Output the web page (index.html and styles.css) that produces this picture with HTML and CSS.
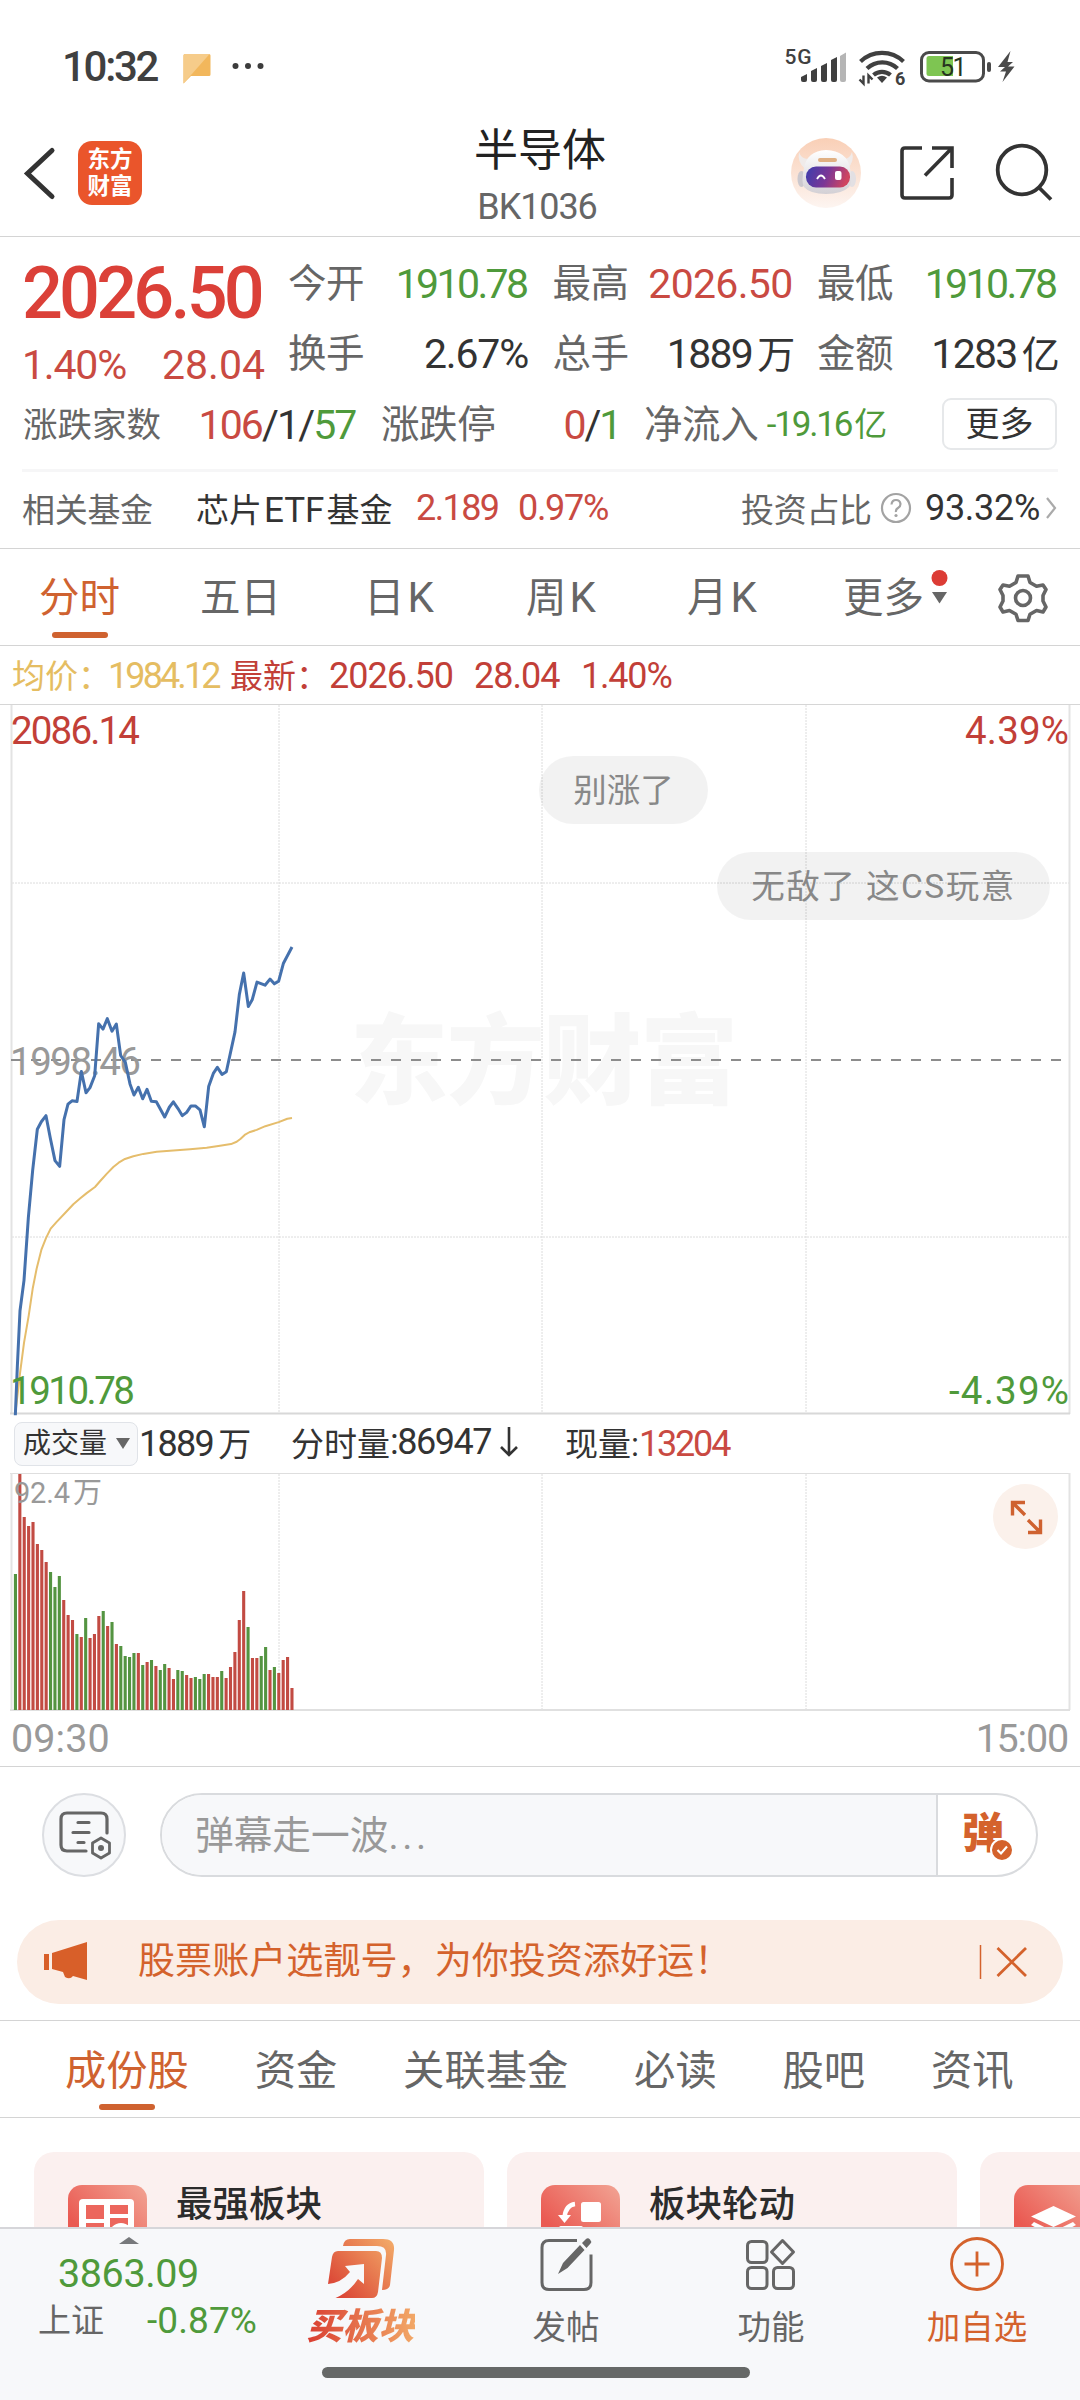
FILE: index.html
```html
<!DOCTYPE html>
<html lang="zh-CN">
<head>
<meta charset="utf-8">
<title>半导体 BK1036</title>
<link rel="stylesheet" href="styles.css">
</head>
<body>
<div class="screen">
  <div class="statusbar">
    <span class="clock">10:32</span>
    <svg class="sb-msg" viewBox="184 52 28 31"><path d="M184.500 54.500q0-1.500 1.500-1.500h24q1.500 0 1.500 1.500v19q0 1.500-1.500 1.500h-18l-7.500 7.500z" fill="#f2b75c"/><path d="M184.500 54.500q0-1.500 1.500-1.500h24.600l-26.100 29.500z" fill="#f6cc8a"/></svg>
    <svg class="sb-dots" viewBox="0 0 32 8"><g fill="#3c3c3c"><circle cx="3.500" cy="4" r="3"/><circle cx="16" cy="4" r="3"/><circle cx="28.500" cy="4" r="3"/></g></svg>
    <svg class="sb-right" viewBox="780 44 240 42">
      <text x="784.500" y="63" class="svg-5g" textLength="27">5G</text>
      <g fill="#404040"><path d="M801 76l6-3v6q0 2-2 2h-2q-2 0-2-2z"/><path d="M811 70l6-3v12q0 2-2 2h-2q-2 0-2-2z"/><path d="M821 65l6-3v17q0 2-2 2h-2q-2 0-2-2z"/><path d="M831 59l6-3v23q0 2-2 2h-2q-2 0-2-2z"/></g>
      <path d="M840 55l6-3.500v27.500q0 2-2 2h-2q-2 0-2-2z" fill="#b5b5b5"/>
      <g fill="none" stroke="#404040" stroke-width="4.200"><path d="M860.500 60.500a31 31 0 0 1 43 0"/><path d="M867 67.500a22 22 0 0 1 30.500 0"/><path d="M873.500 74a13 13 0 0 1 17 0"/></g>
      <path d="M882 82l-5-5.500q5-3.500 10 0z" fill="#404040"/>
      <path d="M863.500 74.500v8l-4-4M868.500 82.500v-8l4 4" fill="none" stroke="#404040" stroke-width="2.400"/>
      <text x="895" y="83.500" class="svg-six">6</text>
      <rect x="921.500" y="51.500" width="62" height="28.500" rx="7.500" fill="#fff" stroke="#4a4a4a" stroke-width="3"/>
      <path d="M929 55h24v20h-24q-2.500 0-2.500-2.500v-15q0-2.500 2.500-2.500z" fill="#7ec552"/>
      <rect x="987" y="61" width="4" height="10" rx="2" fill="#4a4a4a"/>
      <text x="940" y="74.500" class="svg-batt">51</text>
      <path d="M1010.500 50l-12.500 16h7l-5 4.500h6l-3.500 10.500 12-15.500h-6.500l5-4.500h-5.500z" fill="#4a4a4a"/>
    </svg>
  </div>

  <header class="header">
    <svg class="back" viewBox="22 144 36 58"><path d="M52 150.500L27.500 173.500L52 196.500" fill="none" stroke="#333" stroke-width="5" stroke-linecap="round"/></svg>
    <div class="logo"><span>东方</span><span>财富</span></div>
    <div class="title"><div class="name">半导体</div><div class="code">BK1036</div></div>
    <svg class="robot" viewBox="791 138 70 70">
      <defs><linearGradient id="rb" x1="0" y1="0" x2="0" y2="1"><stop offset="0" stop-color="#f9cfb6"/><stop offset="1" stop-color="#fdf5f1"/></linearGradient>
      <linearGradient id="rf" x1="0" y1="0" x2="1" y2=".2"><stop offset="0" stop-color="#3b3dae"/><stop offset=".55" stop-color="#7b3796"/><stop offset="1" stop-color="#cf4560"/></linearGradient>
      <linearGradient id="rh" x1="0" y1="0" x2="0" y2="1"><stop offset="0" stop-color="#fff"/><stop offset="1" stop-color="#d3d0d5"/></linearGradient></defs>
      <circle cx="826" cy="173" r="35" fill="url(#rb)"/>
      <path d="M799 152q2 7 9 7l-3 10q-8-7-6-17zM852 152q-2 7-8 7l3 10q8-7 5-17z" fill="#f0ebea"/>
      <ellipse cx="801.500" cy="179" rx="4" ry="8" fill="#cbc8ce"/><ellipse cx="852" cy="179" rx="4" ry="8" fill="#e3e0e3"/>
      <path d="M804 168q3-17 22-18q21 1 24 18q3 14-1 19q-7 7-23 7t-22-7q-3-5 0-19z" fill="url(#rh)"/>
      <rect x="818" y="158" width="19" height="4" rx="2" fill="#e0b083"/>
      <rect x="806" y="166.500" width="44" height="21" rx="10" fill="url(#rf)"/>
      <path d="M817 179q4-7 8 0" fill="none" stroke="#fff" stroke-width="1.800"/>
      <rect x="835" y="171" width="6.500" height="9" rx="2" fill="#fff"/>
    </svg>
    <svg class="share" viewBox="898 144 58 58"><g fill="none" stroke="#333" stroke-width="3.600"><path d="M922 148h-17q-3 0-3 3v44q0 3 3 3h44q3 0 3-3v-17"/><path d="M932 148h20v20M951 149l-26 26.500" /></g></svg>
    <svg class="search" viewBox="994 142 60 60"><g fill="none" stroke="#333" stroke-width="3.800"><circle cx="1022" cy="170" r="24.300"/><path d="M1039.500 188l11.500 11.500"/></g></svg>
  </header>

  <section class="quote">
    <div class="quote-top">
      <div class="price-block">
        <div class="price">2026.50</div>
        <div class="chg"><span>1.40%</span><span class="chg-abs">28.04</span></div>
      </div>
      <div class="stats">
        <div class="pair"><label>今开</label><b class="dn">1910.78</b></div>
        <div class="pair"><label>最高</label><b class="up high">2026.50</b></div>
        <div class="pair"><label>最低</label><b class="dn">1910.78</b></div>
        <div class="pair"><label>换手</label><b class="pct">2.67%</b></div>
        <div class="pair"><label>总手</label><b class="wide">1889<i>万</i></b></div>
        <div class="pair"><label>金额</label><b class="wide">1283<i>亿</i></b></div>
      </div>
    </div>
    <div class="quote-mid">
      <div class="pair p1"><label class="sm">涨跌家数</label><b><span class="up">106</span>/1/<span class="dn">57</span></b></div>
      <div class="pair p2"><label>涨跌停</label><b><span class="up">0</span>/<span class="dn">1</span></b></div>
      <div class="pair p3"><label>净流入</label><b class="dn small">-19.16<i>亿</i></b></div>
      <button class="more">更多</button>
    </div>
    <div class="fund">
      <span class="lbl">相关基金</span><span class="fname">芯片<i>ETF</i>基金</span><span class="up f1">2.189</span><span class="up f2">0.97%</span>
      <span class="lbl right">投资占比</span>
      <svg class="help" viewBox="0 0 32 32"><circle cx="16" cy="16" r="14" fill="none" stroke="#a3a3a3" stroke-width="2.200"/><path d="M11.500 12.500q.5-4.500 4.500-4.500t4.500 4q0 2.500-2.500 4t-2 4" fill="none" stroke="#a3a3a3" stroke-width="2.200"/><circle cx="16" cy="23.500" r="1.600" fill="#a3a3a3"/></svg>
      <span class="ratio">93.32%</span>
      <svg class="chev" viewBox="0 0 12 24"><path d="M2 2l8 10-8 10" fill="none" stroke="#aaa" stroke-width="2.200"/></svg>
    </div>
  </section>

  <nav class="ktabs">
    <span class="on">分时</span><span>五日</span><span>日<i>K</i></span><span>周<i>K</i></span><span>月<i>K</i></span><span class="ktmore">更多</span>
    <svg class="tri" viewBox="930 566 18 40"><circle cx="939.500" cy="577" r="8" fill="#dc3c35"/><path d="M932 591h15l-7.500 11.500z" fill="#666"/></svg>
    <svg class="gear" viewBox="998 570 50 52"><g fill="none" stroke="#666" stroke-width="3.600" stroke-linejoin="round"><path d="M1018 575h10l2 6.500 6.500 3.800 6.500-1.300 3 4.500-3 6 0 5.500 3 6-3 5-6.500-1.500-6.500 3.800-2 6.200h-10l-2-6.200-6.500-3.800-6.500 1.500-3-5 3-6v-5.500l-3-6 3-4.500 6.500 1.300 6.500-3.800z"/><circle cx="1023" cy="597" r="7.500"/></g></svg>
  </nav>

  <div class="legend"><span class="avg">均价：<em class="l1">1984.12</em></span><span class="now">最新：<em class="l2">2026.50</em><em class="l3">28.04</em><em class="l4">1.40%</em></span></div>

  <div class="chart">
    <svg class="plot" viewBox="0 704 1080 711">
      <text x="350" y="1096" class="wm" textLength="388">东方财富</text>
      <g class="grid"><path d="M279 705v709M542 705v709M806 705v709"/><path d="M12 883h1057M12 1237h1057"/></g>
      <path d="M0 704.500h1080" stroke="#d6d6d6"/>
      <path d="M11.500 705v709M1069.500 705v709" stroke="#e3e3e3" stroke-width="2"/>
      <path d="M10 1413.500h1060" stroke="#d8d8d8" stroke-width="2"/>
      <path d="M11 1060h1052" stroke="#8c8c8c" stroke-width="2" stroke-dasharray="10 10"/>
      <g class="axis"><text x="11" y="744" textLength="129" class="t-up">2086.14</text><text x="965" y="744" textLength="104" class="t-up">4.39%</text>
      <text x="10" y="1074.500" textLength="131" class="t-gray">1998.46</text></g>
      <g transform="translate(0 900) scale(.33333 .33807)" fill="none" stroke-linejoin="round">
        <path vector-effect="non-scaling-stroke" stroke="#e5bd6c" stroke-width="2" d="M46 1520L60 1400L72 1310L86 1230L98 1150L110 1090L124 1035L138 1000L152 972L170 952L196 925L220 900L240 883L260 867L285 849L300 832L320 810L340 790L356 777L375 766L400 758L430 751L470 745L520 741L570 737L620 733L660 727L693 722L710 715L722 706L734 695L748 687L770 680L796 669L836 657L862 647L876 645"/>
        <path vector-effect="non-scaling-stroke" stroke="#4571ad" stroke-width="3" d="M46 1524L52 1380L60 1215L72 1125L85 940L98 800L112 678L124 656L138 638L151 705L165 771L179 788L192 650L204 604L216 594L231 596L244 507L258 570L270 555L284 520L296 366L309 382L322 351L336 388L349 367L362 460L376 480L390 544L402 577L415 554L428 588L441 560L454 595L469 597L494 642L508 613L520 597L534 617L547 638L560 628L573 609L586 609L600 621L613 671L626 552L640 513L652 495L666 516L679 508L705 390L718 280L731 216L745 315L757 294L771 243L795 252L810 234L823 248L836 240L850 188L876 139"/>
      </g>
      <g class="axis"><text x="10" y="1404" textLength="125" class="t-dn">1910.78</text><text x="949" y="1404" textLength="120" class="t-dn">-4.39%</text></g>
    </svg>
    <div class="danmu d1">别涨了</div>
    <div class="danmu d2">无敌了 这CS玩意</div>
  </div>

  <div class="volhead">
    <span class="select">成交量<svg viewBox="0 0 14 11"><path d="M0 0h14l-7 11z" fill="#666"/></svg></span>
    <span class="v1">1889<i>万</i></span><span class="v2">分时量<em>:86947</em><svg viewBox="0 0 18 30"><path d="M9 0v28M1 20l8 8 8-8" fill="none" stroke="#333" stroke-width="2.600"/></svg></span><span class="v3">现量:<em>13204</em></span>
  </div>

  <div class="volume">
    <svg class="volplot" viewBox="0 1472 1080 240">
      <g class="grid"><path d="M279 1474v236M542 1474v236M806 1474v236"/></g>
      <path d="M10 1473.500h1060" stroke="#dedede"/><path d="M11.500 1473v237M1069.500 1473v237" stroke="#e3e3e3" stroke-width="2"/><path d="M10 1710h1060" stroke="#e0e0e0" stroke-width="2"/>
      <g id="bars"></g>
      <text x="14" y="1503" class="volmax" textLength="56">92.4</text><text x="73" y="1503" class="volmax" textLength="27">万</text>
    </svg>
    <div class="expand"><svg viewBox="1008 1500 34 34"><g fill="none" stroke="#cf6230" stroke-width="3.400"><path d="M1024 1502.500h-12.500v13M1012 1503l12 12M1027 1532.500h12.500v-13M1039 1532l-12-12"/></g></svg></div>
  </div>
  <div class="times"><span class="ta">09:30</span><span class="tb">15:00</span></div>

  <div class="inputrow">
    <div class="round"><svg viewBox="58 1811 54 50"><g fill="none" stroke="#666" stroke-width="3.200" stroke-linecap="round"><path d="M86 1852H67q-6 0-6-6v-26q0-6 6-6h34q6 0 6 6v14"/><path d="M78 1823.500h11M73 1833.500h16M78 1843.500h6"/></g><path d="M101 1839l8.500 5v10l-8.500 5-8.500-5v-10z" fill="none" stroke="#666" stroke-width="2.800" stroke-linejoin="round"/><circle cx="101" cy="1849" r="3" fill="#666"/></svg></div>
    <div class="field"><div class="ph">弹幕走一波<i>...</i></div><div class="dan"><span>弹</span><svg viewBox="0 0 24 24"><circle cx="12" cy="12" r="11" fill="#d4622c" stroke="#fff" stroke-width="2"/><path d="M7.500 12l3.500 3.500 6-7" fill="none" stroke="#fff" stroke-width="2.200"/></svg></div></div>
  </div>

  <div class="notice">
    <svg class="horn" viewBox="44 1942 44 40"><path d="M44 1954h5v16h-5zM52 1953l35-11v38l-14-4q-3 4-8 1l-2-5-11-3z" fill="#d85f29"/></svg>
    <span>股票账户选靓号，为你投资添好运！</span>
    <svg class="close" viewBox="978 1944 50 36"><path d="M980.500 1945v34" stroke="#d4622c" stroke-width="1.500"/><path d="M997.500 1948l28.500 28M1026 1948l-28.500 28" stroke="#d4622c" stroke-width="2.800"/></svg>
  </div>

  <nav class="tabs"><span class="on">成份股</span><span>资金</span><span>关联基金</span><span>必读</span><span>股吧</span><span>资讯</span></nav>

  <div class="cards">
    <div class="card"><svg class="cicon" viewBox="0 0 79 79"><defs><linearGradient id="cg" x1="0" y1="1" x2="1" y2="0"><stop offset="0.300" stop-color="#ea5a52"/><stop offset="1" stop-color="#f2a494"/></linearGradient></defs><rect width="79" height="79" rx="14" fill="url(#cg)"/><path d="M15 14h47q4 0 4 4v40H11V18q0-4 4-4z" fill="#fff"/><path d="M18 20h18v14H18zM42 20h18v9H42zM18 38h18v16H18zM42 33h18v16H42z" fill="#ec665d"/><circle cx="53" cy="50" r="12" fill="#fff"/></svg><span>最强板块</span></div>
    <div class="card"><svg class="cicon" viewBox="0 0 79 79"><rect width="79" height="79" rx="14" fill="url(#cg)"/><rect x="40" y="17" width="20" height="20" rx="2.500" fill="#fff"/><path d="M34 19q-9 1-10.500 13" fill="none" stroke="#fff" stroke-width="4.500"/><path d="M17 30h13l-6.500 8z" fill="#fff"/><rect x="18" y="41" width="24" height="22" rx="2" fill="#fff"/></svg><span>板块轮动</span></div>
    <div class="card"><svg class="cicon" viewBox="0 0 79 79"><rect width="79" height="79" rx="14" fill="url(#cg)"/><path d="M39.500 21L62 31.500 39.500 42 17 31.500z" fill="#fff"/><path d="M20 37l19.500 9.500L59 37l3 3-22.500 12L17 40z" fill="#fff"/></svg></div>
  </div>

  <footer class="bottom">
    <div class="index"><svg viewBox="0 0 20 7"><path d="M0 7L10 0l10 7z" fill="#77797c"/></svg><div class="iv">3863.09</div><div class="ic"><span>上证</span><b>-0.87%</b></div></div>
    <div class="item buy"><svg viewBox="327 2238 68 62"><defs><linearGradient id="bg" gradientUnits="userSpaceOnUse" x1="332" y1="2298" x2="392" y2="2242"><stop offset="0" stop-color="#d93d31"/><stop offset="1" stop-color="#f2a867"/></linearGradient></defs><g fill="url(#bg)"><path d="M343 2246q1-7 7-7h33q12 0 11 11l-4 35q-1 5-8 5l4-35q1-9-9-9z"/><path d="M338 2251h38q6 0 6 7l-4 34q-1 6-6 6h-36.500q14-6 22.500-19l6 5v-20l-19 2 5 6q-9 11-22 12l4-27q1-6 6-6z"/></g></svg><span>买板块</span></div>
    <div class="item post"><svg viewBox="538 2236 56 56"><g fill="none" stroke="#666" stroke-width="3"><path d="M577 2240.500h-28q-7 0-7 7v35q0 7 7 7h35q7 0 7-7v-28"/></g><path d="M558 2274l5-11 17-18 4.500 5-17 18zM582 2243l4-4q2-1.500 4 .5t.5 4l-4 4.500z" fill="#666"/></svg><span>发帖</span></div>
    <div class="item func"><svg viewBox="745 2236 54 56"><g fill="none" stroke="#666" stroke-width="3"><rect x="748.500" y="2241.500" width="19.500" height="21" rx="4"/><rect x="748.500" y="2267.500" width="19.500" height="21" rx="4"/><rect x="774.500" y="2267.500" width="20" height="21" rx="4"/><path d="M783.500 2240.500l11 11.500-11 11.500-11-11.500z" stroke-linejoin="round"/></g></svg><span>功能</span></div>
    <div class="item add"><svg viewBox="949 2237 56 56"><g fill="none" stroke="#d4622c" stroke-width="2.800"><circle cx="977" cy="2265" r="25.500"/><path d="M977 2252.500v25M964.500 2265h25"/></g></svg><span>加自选</span></div>
    <div class="home"></div>
  </footer>
</div>
<script src="script.js"></script>
</body>
</html>
```
FILE: styles.css
```css
* { box-sizing: border-box; margin: 0; padding: 0; }
body { width: 1080px; background: #fff; font-family: Roboto, "Noto Sans CJK SC", sans-serif; color: #333; }
i, em { font-style: normal; }
b { font-weight: 400; }
svg { display: block; flex: none; overflow: visible; }
span, label, b { white-space: nowrap; }
.screen { width: 1080px; height: 2400px; overflow: hidden; display: flex; flex-direction: column; }
.up { color: #c94a42; }
.dn { color: #4f9a3b; }

.statusbar { height: 130px; display: flex; align-items: center; padding: 2px 60px 0 62px; }
.clock { font-size: 42px; font-weight: 500; width: 121px; color: #404040; letter-spacing: -2.300px; }
.sb-msg { width: 28px; height: 31px; margin-top: 4px; }
.sb-dots { width: 32px; height: 8px; margin-left: 21px; }
.sb-right { width: 240px; height: 42px; margin-left: auto; }
.svg-5g { font: 500 21px Roboto; fill: #404040; }
.svg-six { font: 700 18px Roboto; fill: #404040; }
.svg-batt { font: 400 25px Roboto; fill: #26351f; letter-spacing: -1.500px; }

.header { height: 107px; border-bottom: 1px solid #d4d4d4; display: flex; align-items: flex-start; padding-left: 22px; }
.back { width: 36px; height: 58px; margin-top: 14px; }
.logo { width: 64px; height: 64px; margin: 11px 0 0 20px; background: #ea552b; border-radius: 14px; display: flex; flex-direction: column; align-items: center; padding-top: 5px; }
.logo span { font-size: 22.500px; line-height: 27px; font-weight: 700; color: #fff; }
.title { width: 300px; margin-left: 246px; text-align: center; }
.name { font-size: 44px; line-height: 50px; margin-top: -4px; color: #222; padding-left: 4px; }
.code { font-size: 36px; line-height: 40px; color: #666; margin-top: 11px; letter-spacing: -1.100px; margin-left: -2px; }
.robot { width: 70px; height: 70px; margin: 8px 0 0 103px; }
.share { width: 58px; height: 58px; margin: 14px 0 0 37px; }
.search { width: 60px; height: 60px; margin: 12px 0 0 38px; }

.quote { height: 312px; border-bottom: 1px solid #d4d4d4; }
.quote-top { display: flex; height: 151px; }
.price-block { width: 288px; padding: 19px 0 0 22px; }
.price { font-size: 72px; font-weight: 500; line-height: 76px; color: #db4038; letter-spacing: -3.800px; }
.chg { display: flex; justify-content: space-between; width: 243px; color: #c94a42; font-size: 41px; line-height: 50px; margin-top: 8px; letter-spacing: -1.200px; }
.chg-abs { letter-spacing: 0; }
.stats { display: grid; grid-template-columns: 240px 240px 240px; grid-template-rows: 50px 50px; row-gap: 20px; column-gap: 24.500px; padding-top: 22px; }
.pair { display: flex; justify-content: space-between; line-height: 50px; }
.pair label { font-size: 38.500px; color: #666; letter-spacing: -.4px; }
.pair b { font-size: 41px; letter-spacing: -2.600px; margin-right: 1.500px; }
.pair b.high { letter-spacing: -.7px; margin-right: 0; }
.pair b.wide { letter-spacing: -1.700px; margin-right: -1px; }
.pair b.pct { letter-spacing: -1.200px; margin-right: 0; }
.pair i { font-size: 38px; margin-left: 5px; }
.quote-mid { display: flex; height: 82px; padding: 12px 0 0 23px; }
.pair .sm { font-size: 34.500px; letter-spacing: 0; }
.p1 { width: 334px; } .p1 b { letter-spacing: -1.900px; }
.p2 { width: 238px; margin-left: 24px; } .p2 b { letter-spacing: -2.200px; margin-right: -1px; }
.p3 { width: 241px; margin-left: 25px; }
.pair b.small { font-size: 35px; letter-spacing: -2.200px; margin-right: 0; }
.pair b.small i { font-size: 33px; margin-left: 3px; }
.more { width: 115px; height: 52px; margin-left: 57px; border: 2px solid #e6e8ea; border-radius: 9px; background: #fff; font: 34px/42px Roboto, "Noto Sans CJK SC", sans-serif; color: #333; margin-top: -2px; }
.fund { display: flex; align-items: center; height: 78px; margin: 0 22px; border-top: 3px solid #f6f6f7; font-size: 33px; padding-bottom: 3px; margin-top: -1px; }
.fund .lbl { color: #666; font-size: 33px; letter-spacing: -.3px; width: 174px; }
.fname { width: 220px; color: #333; }
.fname i { font-size: 35px; margin: 0 2px; }
.f1, .f2, .ratio { font-size: 36px; letter-spacing: -1.600px; }
.f1 { width: 102px; } .f2 { width: 223px; letter-spacing: -1.300px; }
.fund .right { width: 139px; }
.help { width: 32px; height: 32px; }
.ratio { margin-left: 13px; width: 120px; letter-spacing: -.3px; }
.chev { width: 12px; height: 24px; }

.ktabs { height: 97px; border-bottom: 1px solid #d4d4d4; display: flex; padding-top: 21px; color: #666; font-size: 40.500px; line-height: 56px; }
.ktabs span { position: relative; }
.ktabs i { margin-left: 3px; font-size: 42px; }
.ktabs span:nth-child(1) { margin-left: 39px; width: 161px; }
.ktabs span:nth-child(2) { width: 164px; }
.ktabs span:nth-child(3) { width: 162px; }
.ktabs span:nth-child(4) { width: 161px; }
.ktabs span:nth-child(5) { width: 156px; }
.ktabs .ktmore { width: 87px; }
.ktabs .on, .tabs .on { color: #cf6230; }
.ktabs .on::after { content: ""; position: absolute; left: 13px; top: 62px; width: 56px; height: 6px; border-radius: 3px; background: #cf6230; }
.tri { width: 18px; height: 40px; margin-top: -3px; }
.gear { width: 50px; height: 52px; margin: 1px 0 0 50px; }

.legend { height: 58px; padding-left: 12px; display: flex; font-size: 33px; line-height: 60px; }
.avg { color: #e5bd62; width: 218px; } .now { color: #c23f38; }
.legend em { font-size: 36px; display: inline-block; }
.l1 { letter-spacing: -2.900px; margin-left: -3px; }
.l2 { width: 145px; letter-spacing: -1px; } .l3 { width: 107px; letter-spacing: -1px; } .l4 { letter-spacing: -1.200px; }

.chart { position: relative; height: 711px; }
.plot { width: 1080px; height: 711px; }
.grid path { fill: none; stroke: #dcdcdc; stroke-width: 1; stroke-dasharray: 2 1; }
.wm { font: 900 98px "Noto Sans CJK SC"; fill: #f7f7f7; }
.axis { font-family: Roboto, sans-serif; font-size: 38.500px; }
.t-up { fill: #c23f38; } .t-dn { fill: #4f9a3b; } .t-gray { fill: #999; }
.danmu { position: absolute; height: 68px; border-radius: 34px; background: rgba(0,0,0,.05); color: #888; font-size: 33.500px; line-height: 69px; white-space: nowrap; text-align: center; }
.d1 { left: 539px; top: 52px; width: 169px; }
.d2 { left: 717px; top: 148px; width: 333px; letter-spacing: 1.500px; }

.volhead { height: 57px; display: flex; align-items: center; font-size: 36px; padding: 0 0 0 14px; }
.select { width: 124px; height: 44px; border: 1px solid #e0e3e8; border-radius: 8px; background: #f7f8fa; font-size: 28px; line-height: 42px; display: flex; align-items: center; padding-left: 8px; }
.select svg { width: 14px; height: 11px; margin-left: 9px; }
.v1, .v2, .v3 { margin-top: -3px; }
.v1 { margin-left: 1px; width: 152px; letter-spacing: -1.700px; } .v1 i { font-size: 33px; margin-left: 5px; }
.v2 { font-size: 33px; display: flex; align-items: center; width: 274px; }
.v2 em, .v3 em { font-size: 36px; letter-spacing: -1.500px; }
.v2 svg { width: 18px; height: 30px; margin-left: 9px; }
.v3 { font-size: 33px; } .v3 em { color: #c94a42; letter-spacing: -2.200px; }

.volume { position: relative; height: 240px; }
.volplot { width: 1080px; height: 240px; }
.volmax { font: 29px Roboto, "Noto Sans CJK SC"; fill: #999; }
.expand { position: absolute; left: 993px; top: 12px; width: 65px; height: 65px; border-radius: 50%; background: #fbf1eb; display: flex; align-items: center; justify-content: center; }
.expand svg { width: 34px; height: 34px; }
.times { height: 55px; border-bottom: 1px solid #d4d4d4; display: flex; justify-content: space-between; padding: 0 12px 0 11px; font-size: 39.500px; line-height: 54px; color: #999; }
.ta { letter-spacing: .1px; } .tb { letter-spacing: -1.200px; }

.inputrow { display: flex; margin-top: 26px; height: 84px; flex: none; padding-left: 42px; }
.round { width: 84px; height: 84px; border: 2px solid #dcdee2; border-radius: 50%; background: #f7f8fa; display: flex; align-items: center; justify-content: center; }
.round svg { width: 54px; height: 50px; margin-left: 2px; }
.field { margin-left: 34px; width: 878px; height: 84px; border: 2px solid #d9dbde; border-radius: 42px; display: flex; overflow: hidden; }
.ph { width: 776px; background: #f7f8fa; border-right: 2px solid #d9dbde; padding-left: 33px; font-size: 38.700px; line-height: 82px; color: #999; }
.ph i { letter-spacing: 3.600px; }
.dan { position: relative; padding-left: 24px; }
.dan span { font-size: 42px; line-height: 78px; font-weight: 900; color: #d4622c; }
.dan svg { position: absolute; left: 52px; top: 43px; width: 24px; height: 24px; }

.notice { margin: 43px 17px 0; height: 84px; flex: none; border-radius: 42px; background: #fbede5; display: flex; align-items: center; padding-left: 27px; color: #d4622c; font-size: 37.100px; }
.horn { width: 44px; height: 40px; }
.notice span { margin-left: 50px; width: 840px; line-height: 84px; }
.close { width: 50px; height: 36px; }

.tabs { margin-top: 16px; height: 98px; flex: none; border-top: 1px solid #d4d4d4; border-bottom: 1px solid #d4d4d4; display: flex; gap: 65.800px; padding: 20px 0 0 65px; font-size: 41.300px; line-height: 60px; color: #666; }
.tabs span { position: relative; }
.tabs .on::after { content: ""; position: absolute; left: 34px; top: 63px; width: 56px; height: 6px; border-radius: 3px; background: #cf6230; }

.cards { height: 109px; flex: none; overflow: hidden; display: flex; gap: 23px; padding: 34px 0 0 34px; }
.card { width: 450px; height: 150px; flex: none; border-radius: 20px; background: #fbf0ef; padding: 33px 34px; display: flex; }
.cicon { width: 79px; height: 79px; }
.card span { margin-left: 29px; font-size: 36.500px; line-height: 40px; font-weight: 500; color: #2c2c2c; }

.bottom { position: relative; flex: 1; background: #f7f8fa; border-top: 2px solid #d6d6da; display: flex; }
.index { width: 297px; }
.index svg { width: 20px; height: 7px; margin: 8px 0 0 119px; }
.iv { font-size: 39.500px; line-height: 44px; margin: 8px 0 0 58px; color: #4f9a3b; letter-spacing: -.4px; }
.ic { display: flex; justify-content: space-between; width: 219px; margin: 2px 0 0 38px; font-size: 33px; line-height: 46px; color: #666; }
.ic b { font-size: 37px; color: #4f9a3b; letter-spacing: .1px; }
.item { display: flex; flex-direction: column; align-items: center; font-size: 33.500px; line-height: 40px; color: #666; padding-top: 7px; }
.item svg { height: 56px; width: 56px; }
.item span { margin-top: 16px; }
.buy { width: 130px; padding-top: 9px; }
.buy svg { width: 68px; height: 62px; margin-left: -3px; }
.buy span { margin: 7px 3px 0 0; font-size: 36px; font-weight: 900; font-style: italic; background: linear-gradient(90deg, #d93d31, #f2a867); -webkit-background-clip: text; background-clip: text; color: transparent; }
.post { margin-left: 76px; width: 126px; }
.func { margin-left: 78px; width: 128px; }
.add { margin-left: 78px; width: 128px; color: #d4622c; }
.home { position: absolute; left: 322px; top: 138px; width: 428px; height: 11px; border-radius: 6px; background: #666867; }
```
FILE: script.js
```js
// Minute volume bars: height in pixels, r = rising minute, g = falling minute.
const volumes = "136g 236r 193r 184r 188r 166r 160r 148r 138g 123g 134g 110r 95r 90r 76g 73r 92g 72r 76r 94r 99g 84r 88g 66r 64g 54g 53g 57g 57r 45g 48r 50g 44r 40g 46g 42r 31r 40g 39g 35r 32r 33g 31g 36g 36r 33r 33r 39g 32r 43r 58r 90r 119r 83g 52r 52r 54g 63g 40r 43g 37r 50r 53r 22r".split(" ");
const bars = document.getElementById("bars");
volumes.forEach((v, i) => {
  const h = parseInt(v, 10);
  const r = document.createElementNS("http://www.w3.org/2000/svg", "rect");
  r.setAttribute("x", (13.9 + i * 4.389).toFixed(2));
  r.setAttribute("y", 1710 - h);
  r.setAttribute("width", 3.1);
  r.setAttribute("height", h);
  r.setAttribute("fill", v.endsWith("r") ? "#c24b43" : "#549441");
  bars.appendChild(r);
});
```
